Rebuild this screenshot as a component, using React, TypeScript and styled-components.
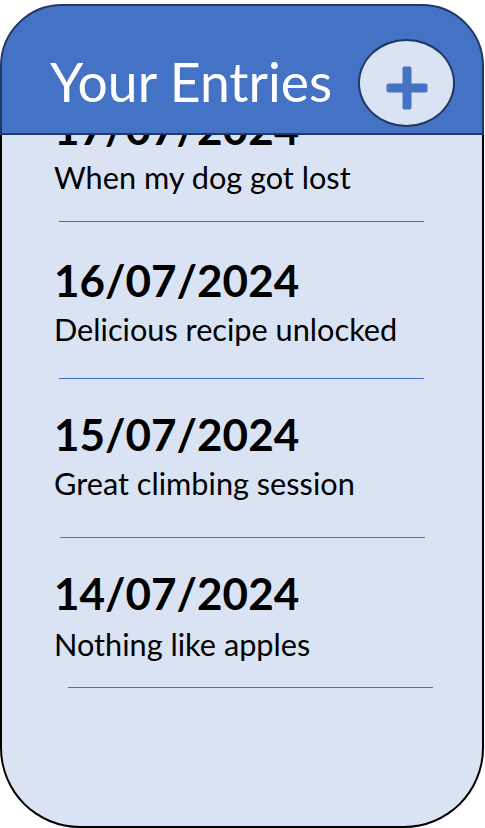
import React from "react";
import styled, { createGlobalStyle } from "styled-components";

const GlobalStyle = createGlobalStyle`
  html, body {
    margin: 0;
    padding: 0;
    background: #ffffff;
  }
  body {
    font-family: Lato, "Open Sans", sans-serif;
  }
`;

const Phone = styled.div`
  box-sizing: border-box;
  width: 484px;
  height: 824px;
  margin-top: 4px;
  display: flex;
  flex-direction: column;
`;

const Header = styled.header`
  box-sizing: border-box;
  height: 131px;
  flex: none;
  background: #4472c4;
  border: 2px solid #203864;
  border-radius: 62px 62px 0 0;
  display: flex;
  align-items: flex-end;
  justify-content: space-between;
  padding: 0 27px 6px 48px;
`;

const Title = styled.h1`
  margin: 0 0 16px 0;
  font-family: Lato, sans-serif;
  font-weight: 400;
  font-size: 53.5px;
  line-height: 60px;
  color: #ffffff;
`;

const AddButton = styled.button`
  box-sizing: border-box;
  width: 97px;
  height: 88px;
  border-radius: 50%;
  background: #dae3f3;
  border: 2px solid #203864;
  padding: 0;
  display: flex;
  align-items: center;
  justify-content: center;
  cursor: pointer;
`;

const Body = styled.main`
  box-sizing: border-box;
  flex: 1;
  background: #dae3f3;
  border: 2px solid #000000;
  border-top: none;
  border-radius: 0 0 80px 80px;
  overflow: hidden;
`;

const List = styled.div<{ $scroll: number }>`
  margin-top: ${(p) => -p.$scroll}px;
  display: flex;
  flex-direction: column;
`;

const Entry = styled.article<{ $gapAfter: number }>`
  display: flex;
  flex-direction: column;
  padding-left: 52px;
  margin-bottom: ${(p) => p.$gapAfter}px;
`;

const DateText = styled.div`
  font-family: Lato, sans-serif;
  font-weight: 700;
  font-size: 44px;
  line-height: 44px;
  color: #000000;
`;

const Description = styled.div<{ $gap: number }>`
  margin-top: ${(p) => p.$gap}px;
  font-family: Lato, sans-serif;
  font-weight: 400;
  font-size: 30.7px;
  line-height: 35px;
  color: #000000;
`;

const Divider = styled.hr<{ $gap: number; $inset: number }>`
  box-sizing: border-box;
  margin: ${(p) => p.$gap}px 0 0 ${(p) => p.$inset}px;
  width: 365px;
  height: 1px;
  border: none;
  background: #4472c4;
`;

const PlusIcon = () => (
  <svg width="50" height="52" viewBox="0 0 50 52" style={{ marginTop: 10 }}>
    <rect x="4.5" y="21.5" width="41" height="9" rx="2" fill="#4472c4" />
    <rect x="20.5" y="4.5" width="9" height="43" rx="2" fill="#4472c4" />
  </svg>
);

const entries = [
  { date: "17/07/2024", text: "When my dog got lost", descGap: 10, divGap: 26, inset: 5, after: 36 },
  { date: "16/07/2024", text: "Delicious recipe unlocked", descGap: 10, divGap: 31, inset: 5, after: 33 },
  { date: "15/07/2024", text: "Great climbing session", descGap: 10, divGap: 36, inset: 6, after: 33 },
  { date: "14/07/2024", text: "Nothing like apples", descGap: 12, divGap: 25, inset: 14, after: 0 },
];

export default function App() {
  return (
    <>
      <GlobalStyle />
      <Phone>
        <Header>
          <Title>Your Entries</Title>
          <AddButton aria-label="Add entry">
            <PlusIcon />
          </AddButton>
        </Header>
        <Body>
          <List $scroll={29}>
            {entries.map((e) => (
              <Entry key={e.date} $gapAfter={e.after}>
                <DateText>{e.date}</DateText>
                <Description $gap={e.descGap}>{e.text}</Description>
                <Divider $gap={e.divGap} $inset={e.inset} />
              </Entry>
            ))}
          </List>
        </Body>
      </Phone>
    </>
  );
}
